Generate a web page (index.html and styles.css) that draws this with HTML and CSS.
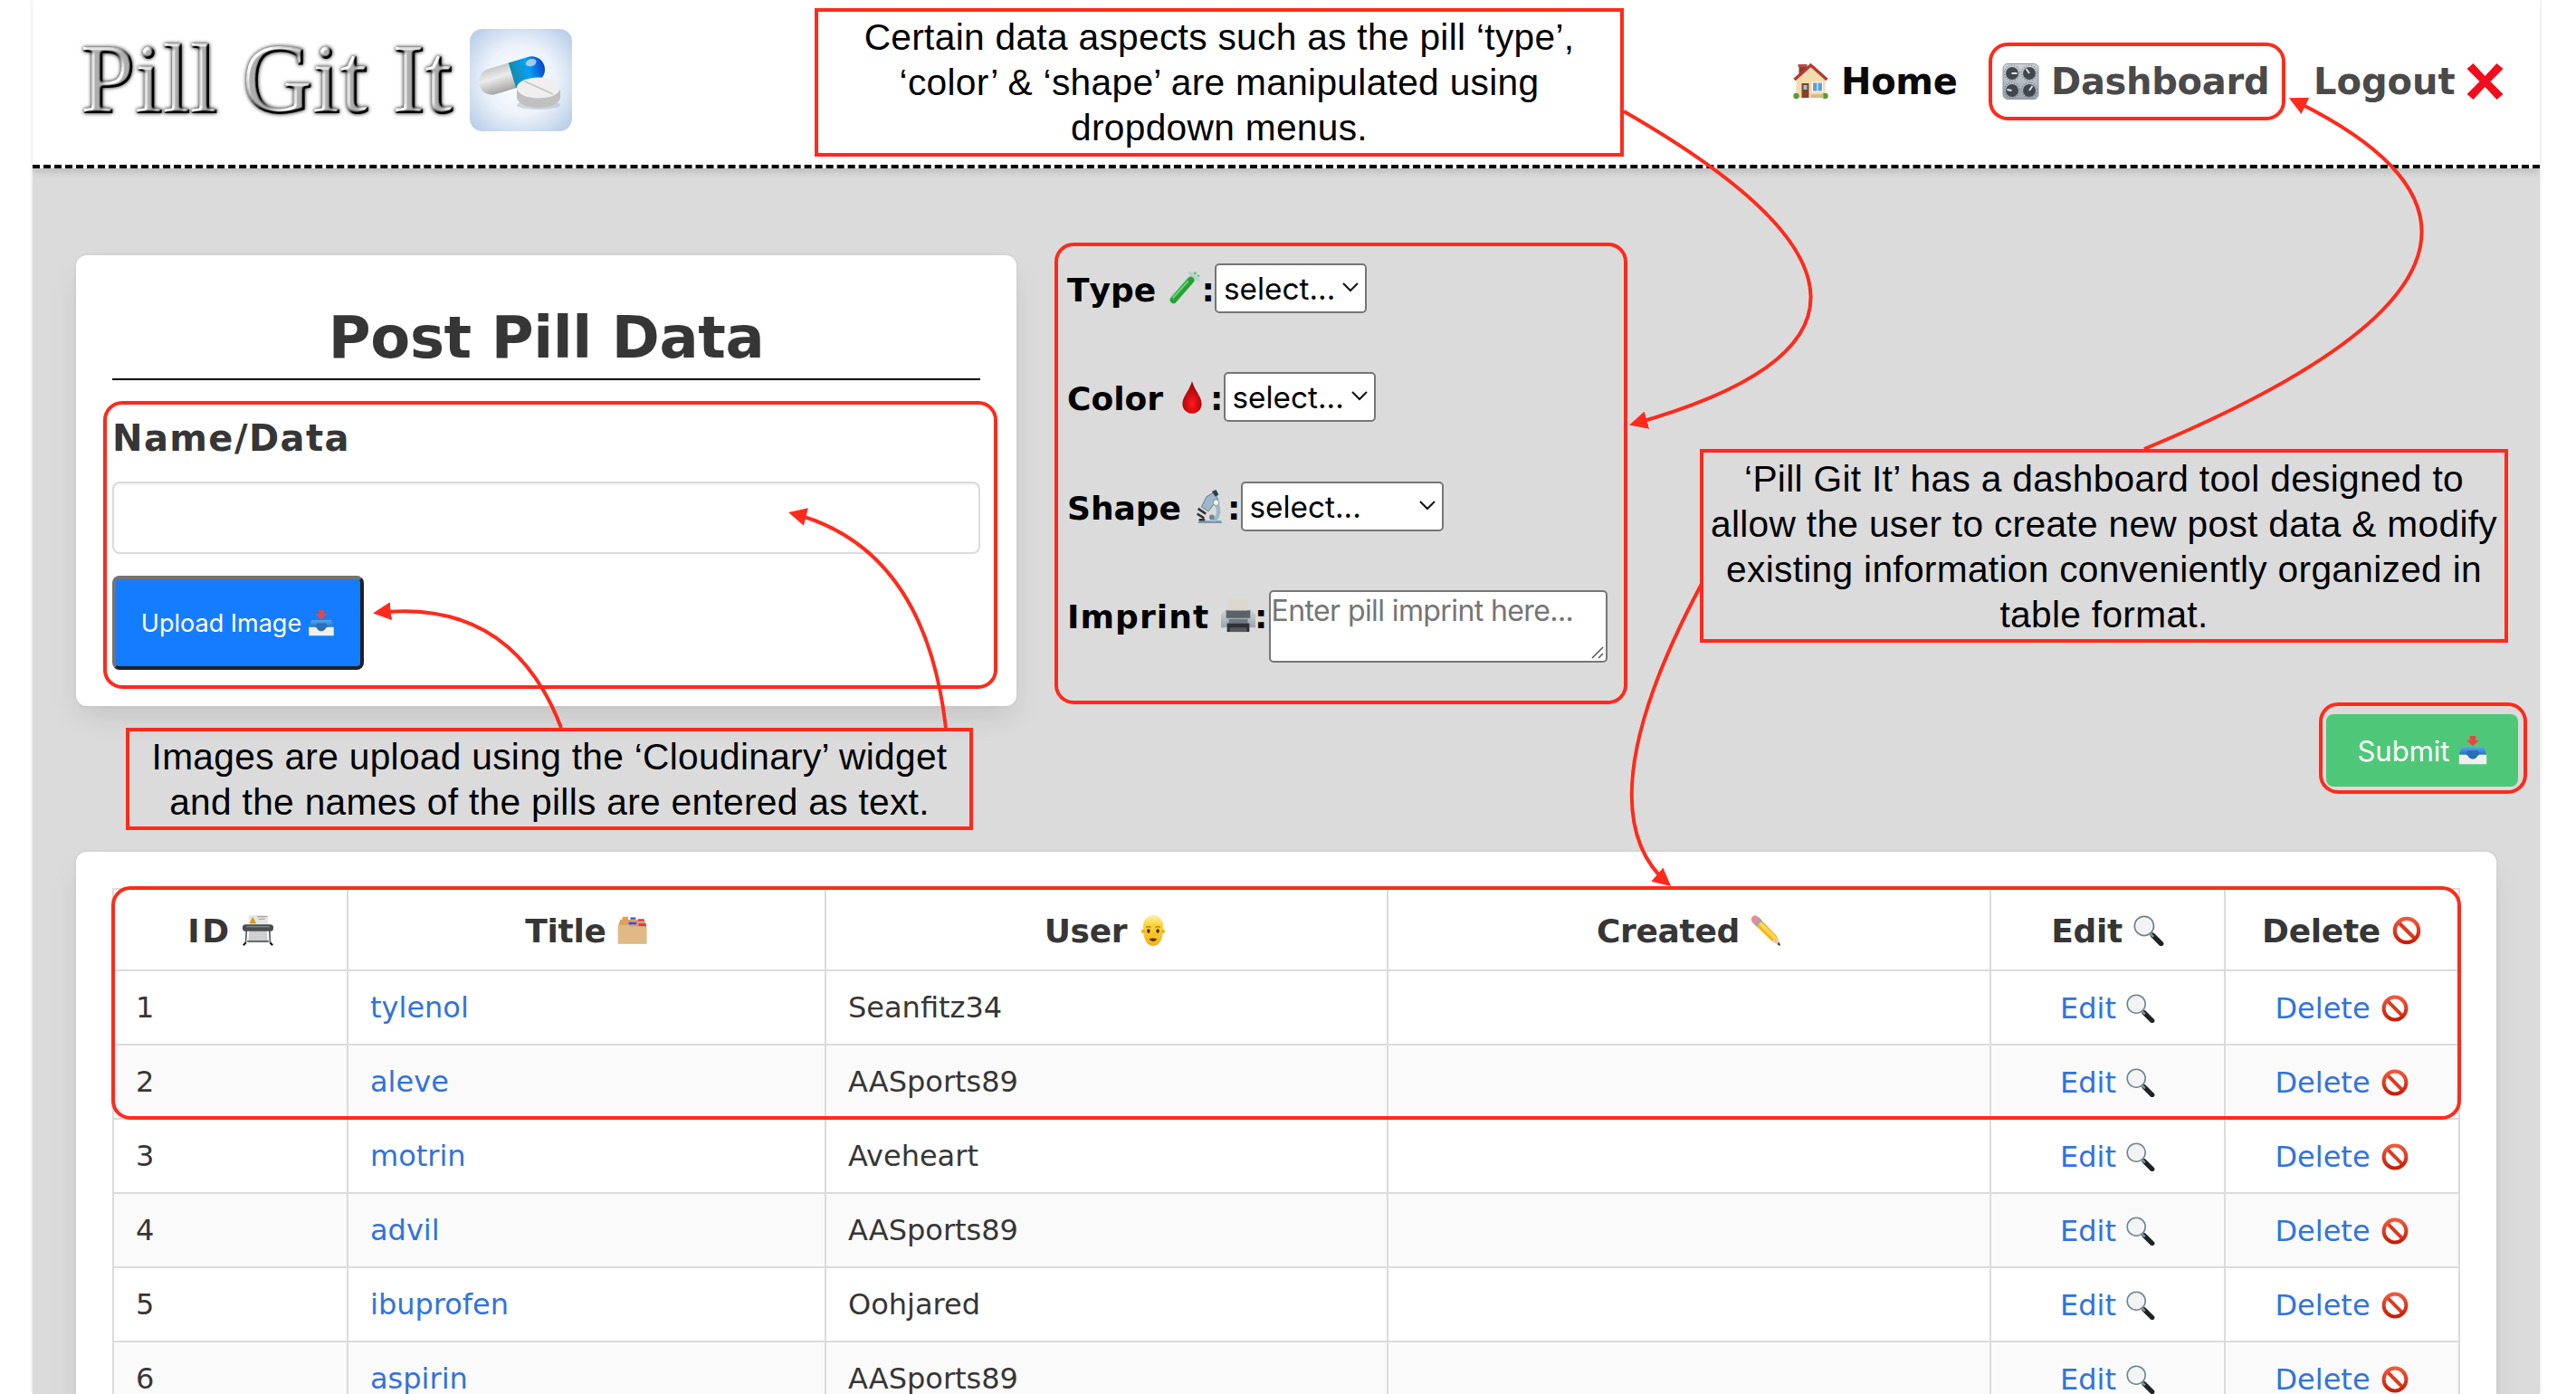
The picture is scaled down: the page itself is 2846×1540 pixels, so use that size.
FILE: index.html
```html
<!DOCTYPE html>
<html lang="en">
<head>
<meta charset="utf-8">
<title>Pill Git It</title>
<link rel="stylesheet" href="styles.css">
</head>
<body>
<svg class="defs" width="0" height="0">
  <defs>
    <filter id="bevel" x="-5%" y="-10%" width="110%" height="120%" color-interpolation-filters="sRGB">
      <feGaussianBlur in="SourceAlpha" stdDeviation="1.6" result="soft"/>
      <feDiffuseLighting in="soft" surfaceScale="5" diffuseConstant="1.1" lighting-color="#fff" result="lit"><feDistantLight azimuth="225" elevation="38"/></feDiffuseLighting>
      <feComposite in="lit" in2="SourceAlpha" operator="in" result="metal"/>
      <feGaussianBlur in="SourceAlpha" stdDeviation="2" result="shade"/>
      <feMerge><feMergeNode in="shade"/><feMergeNode in="metal"/></feMerge>
    </filter>
    <linearGradient id="gBlue" x1="0" y1="0" x2="0" y2="1"><stop offset="0" stop-color="#5aa9f0"/><stop offset="1" stop-color="#2371c4"/></linearGradient>
    <linearGradient id="gRed" x1="0" y1="0" x2="0" y2="1"><stop offset="0" stop-color="#f0583c"/><stop offset="1" stop-color="#c81e08"/></linearGradient>
    <linearGradient id="gGrey" x1="0" y1="0" x2="0" y2="1"><stop offset="0" stop-color="#cfd5d9"/><stop offset="1" stop-color="#9ba3ab"/></linearGradient>
    <linearGradient id="gFace" x1="0" y1="0" x2="0" y2="1"><stop offset="0" stop-color="#fdf3b0"/><stop offset=".3" stop-color="#fcd53a"/><stop offset="1" stop-color="#f0b01c"/></linearGradient>
    <radialGradient id="gDrop" cx=".5" cy=".7" r=".6"><stop offset="0" stop-color="#ff1a1a"/><stop offset="1" stop-color="#a40008"/></radialGradient>
    <radialGradient id="gTile" r=".68"><stop offset="0" stop-color="#fff"/><stop offset=".5" stop-color="#edf2fb"/><stop offset="1" stop-color="#b5cbe6"/></radialGradient>
    <linearGradient id="gCap" x1="0" y1="0" x2="1" y2="0"><stop offset="0" stop-color="#158ba8"/><stop offset=".5" stop-color="#0aa0f5"/><stop offset="1" stop-color="#0a45c8"/></linearGradient>
    <linearGradient id="gShell" x1="0" y1="0" x2="0" y2="1"><stop offset="0" stop-color="#c8c8c8"/><stop offset=".4" stop-color="#ececec"/><stop offset="1" stop-color="#a4a4a4"/></linearGradient>
  </defs>
  <symbol id="house" viewBox="0 0 40 40">
    <path d="M7 3h8v12H7z" fill="#8e3b33"/><path d="M6 1h10v3H6z" fill="#b05045"/>
    <path d="M4 18 20 4l16 14v20H4z" fill="#f5dcae"/>
    <path d="M2 18 20 2l18 16" fill="none" stroke="#b8392f" stroke-width="3.4"/>
    <path d="M10 22h8v16h-8z" fill="#86402b"/><path d="M12 24h4v5h-4z" fill="#8ec5ea"/>
    <path d="M22 21h11v10H22z" fill="#5c9fd6" stroke="#fff" stroke-width="1.2"/><path d="M27.500 21v10" stroke="#fff"/>
    <circle cx="4" cy="36" r="3.200" fill="#5c9a32"/><circle cx="36" cy="36" r="3.200" fill="#5c9a32"/><path d="M20 34h14v4H20z" fill="#d8bb88"/>
  </symbol>
  <symbol id="knobs" viewBox="0 0 40 40">
    <rect x=".5" y=".5" width="39" height="39" rx="5" fill="url(#gGrey)" stroke="#8d959b"/>
    <g fill="none" stroke="#69737a" stroke-width="1.200" stroke-dasharray="1 2"><circle cx="10.500" cy="10.500" r="8.500"/><circle cx="29.500" cy="10.500" r="8.500"/><circle cx="10.500" cy="29.500" r="8.500"/><circle cx="29.500" cy="29.500" r="8.500"/></g>
    <g fill="#40484d"><circle cx="10.500" cy="11" r="7"/><circle cx="29.500" cy="11" r="7"/><circle cx="10.500" cy="30" r="7"/><circle cx="29.500" cy="30" r="7"/></g>
    <path d="M10 11h6M29.500 11 26 6M10 30l-5-1M29.500 30l3.500-5" stroke="#e4e8ea" stroke-width="1.800"/>
  </symbol>
  <symbol id="cross" viewBox="0 0 40 40"><path d="M7 0 20 14 33 0l7 6-14 14 14 14-7 6-13-14L7 40l-7-6 14-14L0 6z" fill="#f20d1c"/></symbol>
  <symbol id="tube" viewBox="0 0 40 40">
    <path d="M32 5 7 33" stroke="#c3d8d0" stroke-width="9.500" stroke-linecap="round"/>
    <path d="M28 10 8 33" stroke="#23a336" stroke-width="8" stroke-linecap="round"/>
    <path d="M25 11 7 31" stroke="#72d873" stroke-width="2"/>
    <path d="m26 1 11 9" stroke="#b9cfc6" stroke-width="2.500" stroke-linecap="round"/>
    <circle cx="33" cy="2" r="1.400" fill="#5ec26a"/><circle cx="37" cy="5" r="1.200" fill="#5ec26a"/>
  </symbol>
  <symbol id="drop" viewBox="0 0 40 40"><path d="M20 1C17 12 8.800 19 8.800 27.500a11.200 11.200 0 0 0 22.400 0C31.200 19 23 12 20 1z" fill="url(#gDrop)"/></symbol>
  <symbol id="scope" viewBox="0 0 40 40">
    <path d="M8 36h26l1 3H7z" fill="#7d97a8"/>
    <path d="M27 12c8 5 8 18 1 25h-6c8-7 8-16 2-20z" fill="#9fb9c9"/>
    <path d="m17 8 9-5 4 8-11 14-8-5z" fill="#9cb8ca" stroke="#5d7585"/>
    <path d="m23 2 5-2 3 6-4 2z" fill="#333c42"/>
    <path d="m7 22 9 6M6 28l8 5M8 35h7" stroke="#2e3438" stroke-width="2.600"/>
    <circle cx="28" cy="15" r="3.500" fill="#eef4f7" stroke="#7a909e"/><circle cx="23" cy="32" r="3" fill="#6d8594"/>
  </symbol>
  <symbol id="printer" viewBox="0 0 40 40">
    <path d="M9 1h22v17H9z" fill="#dcd8cc"/>
    <path d="M5 13h30l5 6v15H0V19z" fill="url(#gGrey)"/><path d="M6 14h28v9H6z" fill="#59616b"/>
    <path d="M9 24h22v5H9z" fill="#6e7784"/><path d="M7 29h26v10H7z" fill="#2f3235"/><path d="M10 34h20v5H10z" fill="#55585b"/>
    <path d="M9 1h22v13H9z" fill="#dcd8cc"/>
  </symbol>
  <symbol id="tray" viewBox="0 0 40 40">
    <path d="M5 15h30l4 11H1z" fill="url(#gBlue)"/>
    <path d="M1 26h10c3 0 3 6 9 6s6-6 9-6h10v13H1z" fill="#f1f0ee"/>
    <path d="M11 26c3 0 3 6 9 6s6-6 9-6l-2-6H13z" fill="#2a6fb8"/>
    <path d="M16 0h8v6h5l-9 8-9-8h5z" fill="#e8473f"/>
  </symbol>
  <symbol id="plotter" viewBox="0 0 40 40">
    <path d="M8 0h25v14H8z" fill="#e4e6e6"/><path d="m13 2 5 9H9z" fill="#dc9a18"/><path d="M19 2h13M21 5h8" stroke="#888"/>
    <path d="M9 18h22l2 18H7z" fill="#cfcfcf"/>
    <path d="M5 20 4 37M35 20l1 17M6 34h28" stroke="#5c6062" stroke-width="2" fill="none"/>
    <rect x="0" y="12" width="40" height="9" rx="4" fill="#4b4e50"/><path d="M5 15h30" stroke="#85898c" stroke-width="1.500"/>
    <path d="m1 39 3-3M39 39l-3-3" stroke="#111" stroke-width="2.500"/>
  </symbol>
  <symbol id="dividers" viewBox="0 0 40 40">
    <path d="M4 6h31l3 8v23H1V14z" fill="#cfa272"/>
    <path d="M7 2h7v4H6zM5 7h9v3H5z" fill="#f79a3c"/><path d="M17 3h7v2.500h-7zM15 9h10v3H15z" fill="#3b49e8"/><path d="M27 5h8v2.500h-8zM28 11h9v3h-9z" fill="#f0303c"/>
    <path d="M1 13h13l3 2h21v22H1z" fill="#e0b987"/><path d="M28 11.500h9V14h-9z" fill="#f0303c"/>
  </symbol>
  <symbol id="face" viewBox="0 0 40 40">
    <path d="M20 0c9 0 13 6 13 16 0 14-4 24-13 24S7 30 7 16C7 6 11 0 20 0z" fill="url(#gFace)"/>
    <circle cx="7" cy="21" r="2.500" fill="#f0b01c"/><circle cx="33" cy="21" r="2.500" fill="#f0b01c"/>
    <ellipse cx="14" cy="20.500" rx="2" ry="2.700" fill="#4a2d0b"/><ellipse cx="26" cy="20.500" rx="2" ry="2.700" fill="#4a2d0b"/>
    <path d="M11 16c2-1.500 4-1.500 6 0M23 16c2-1.500 4-1.500 6 0" stroke="#a97417" fill="none" stroke-width="1.400"/><path d="M15 31c3-1.500 7-1.500 10 0-2 4-8 4-10 0z" fill="#5b3410"/>
  </symbol>
  <symbol id="pencil" viewBox="0 0 40 40">
    <path d="m6 13 7-8 22 23-7 6z" fill="#f7b81d"/><path d="m9 10 3-3 22 22-3 3z" fill="#ffd75c"/>
    <path d="m28 34 7-6 4 12z" fill="#ecc898"/><path d="m35 38 2-3 2 5z" fill="#222"/>
    <path d="m4 11 7-8 4 4-7 8z" fill="#9aa6b0"/><path d="M1 6c0-4 4-7 7-5l4 3-7 8-3-3z" fill="#ea8b93"/>
  </symbol>
  <symbol id="lens" viewBox="0 0 40 40">
    <path d="m25 26 11 11" stroke="#1f2326" stroke-width="6.500" stroke-linecap="round"/><path d="m21 23 5 5" stroke="#8b9499" stroke-width="3"/>
    <circle cx="14" cy="14" r="12.500" fill="#f1f3f4" stroke="#72838d" stroke-width="2"/>
  </symbol>
  <symbol id="ban" viewBox="0 0 40 40"><path d="M9 9l22 22" stroke="#dc3a20" stroke-width="5"/><circle cx="20" cy="20" r="15.500" fill="none" stroke="url(#gRed)" stroke-width="5"/></symbol>
</svg>

<div class="page">
  <header class="topbar">
    <div class="brand">
      <span class="wordmark">Pill Git It</span>
      <svg class="brand-tile" viewBox="0 0 113 113">
        <rect width="113" height="113" rx="14" fill="url(#gTile)"/>
        <ellipse cx="76" cy="84" rx="24" ry="5" fill="#b5bdc8" opacity=".6"/>
        <g transform="rotate(-17 46.500 51.500)">
          <rect x="9" y="37" width="75" height="29" rx="14.500" fill="url(#gShell)"/>
          <path d="M47 37h22.500a14.500 14.500 0 0 1 0 29H47z" fill="url(#gCap)"/>
          <ellipse cx="71" cy="44" rx="6" ry="4" fill="#fff" opacity=".6"/>
        </g>
        <path d="M52 66v9c0 7 11 12 24 12s24-5 24-12v-9z" fill="#c0c0c0"/>
        <ellipse cx="76" cy="65" rx="24" ry="11.500" fill="#efefef"/>
        <path d="M60 57.500 92 72" stroke="#c9c4bc" stroke-width="1.500"/>
      </svg>
    </div>
    <nav class="nav">
      <a class="nav-home"><svg class="i"><use href="#house"/></svg>Home</a>
      <a class="nav-dash"><svg class="i"><use href="#knobs"/></svg>Dashboard</a>
      <a class="nav-out">Logout<svg class="i"><use href="#cross"/></svg></a>
    </nav>
  </header>

  <main>
    <section class="editor">
      <form class="card post">
        <h1>Post Pill Data</h1>
        <label class="field-label" for="name">Name/Data</label>
        <input class="text-input" id="name" type="text">
        <button class="upload" type="button"><span>Upload Image</span><svg class="i"><use href="#tray"/></svg></button>
      </form>
      <div class="options">
        <div class="option"><label class="l-type">Type<svg class="i"><use href="#tube"/></svg>:</label><div class="select">select...<svg class="chev" viewBox="0 0 18 12"><path d="m1 1 8 8 8-8"/></svg></div></div>
        <div class="option"><label class="l-color">Color<svg class="i"><use href="#drop"/></svg>:</label><div class="select">select...<svg class="chev" viewBox="0 0 18 12"><path d="m1 1 8 8 8-8"/></svg></div></div>
        <div class="option"><label class="l-shape">Shape<svg class="i"><use href="#scope"/></svg>:</label><div class="select wide">select...<svg class="chev" viewBox="0 0 18 12"><path d="m1 1 8 8 8-8"/></svg></div></div>
        <div class="option"><label class="l-imprint">Imprint<svg class="i"><use href="#printer"/></svg>:</label><div class="area"><span>Enter pill imprint here...</span><svg class="grip" viewBox="0 0 14 14"><path d="M1 13 13 1M8 13l5-5"/></svg></div></div>
      </div>
    </section>

    <div class="actions"><button class="submit" type="button"><span>Submit</span><svg class="i"><use href="#tray"/></svg></button></div>

    <section class="card listing">
      <table>
        <colgroup><col class="c-id"><col class="c-title"><col class="c-user"><col class="c-created"><col class="c-edit"><col class="c-delete"></colgroup>
        <thead>
          <tr>
            <th><span class="pair id">ID<svg class="i"><use href="#plotter"/></svg></span></th>
            <th><span class="pair">Title<svg class="i"><use href="#dividers"/></svg></span></th>
            <th><span class="pair">User<svg class="i"><use href="#face"/></svg></span></th>
            <th><span class="pair">Created<svg class="i"><use href="#pencil"/></svg></span></th>
            <th><span class="pair">Edit<svg class="i"><use href="#lens"/></svg></span></th>
            <th><span class="pair">Delete<svg class="i"><use href="#ban"/></svg></span></th>
          </tr>
        </thead>
        <tbody>
          <tr><td>1</td><td><a>tylenol</a></td><td>Seanfitz34</td><td></td><td class="act"><a class="pair">Edit<svg class="i"><use href="#lens"/></svg></a></td><td class="act"><a class="pair">Delete<svg class="i"><use href="#ban"/></svg></a></td></tr>
          <tr><td>2</td><td><a>aleve</a></td><td>AASports89</td><td></td><td class="act"><a class="pair">Edit<svg class="i"><use href="#lens"/></svg></a></td><td class="act"><a class="pair">Delete<svg class="i"><use href="#ban"/></svg></a></td></tr>
          <tr><td>3</td><td><a>motrin</a></td><td>Aveheart</td><td></td><td class="act"><a class="pair">Edit<svg class="i"><use href="#lens"/></svg></a></td><td class="act"><a class="pair">Delete<svg class="i"><use href="#ban"/></svg></a></td></tr>
          <tr><td>4</td><td><a>advil</a></td><td>AASports89</td><td></td><td class="act"><a class="pair">Edit<svg class="i"><use href="#lens"/></svg></a></td><td class="act"><a class="pair">Delete<svg class="i"><use href="#ban"/></svg></a></td></tr>
          <tr><td>5</td><td><a>ibuprofen</a></td><td>Oohjared</td><td></td><td class="act"><a class="pair">Edit<svg class="i"><use href="#lens"/></svg></a></td><td class="act"><a class="pair">Delete<svg class="i"><use href="#ban"/></svg></a></td></tr>
          <tr><td>6</td><td><a>aspirin</a></td><td>AASports89</td><td></td><td class="act"><a class="pair">Edit<svg class="i"><use href="#lens"/></svg></a></td><td class="act"><a class="pair">Delete<svg class="i"><use href="#ban"/></svg></a></td></tr>
        </tbody>
      </table>
    </section>
  </main>
</div>

<div class="notes">
  <svg class="arrows" viewBox="0 0 2846 1540">
    <defs><marker id="head" viewBox="0 0 20 20" refX="16" refY="10" markerWidth="20" markerHeight="20" markerUnits="userSpaceOnUse" orient="auto"><path d="M0 0 20 10 0 20z" fill="#ff2a1c"/></marker></defs>
    <path d="M1794 123Q2202 357 1804 468.500"/>
    <path d="M2369 496Q2885 281 2532.500 110"/>
    <path d="M1880 645Q1747 894 1843 976.500"/>
    <path d="M620 804Q565 660 416 677"/>
    <path d="M1045 804Q1022 605 875 567"/>
  </svg>
  <div class="ring ring-dash"></div>
  <div class="ring ring-name"></div>
  <div class="ring ring-form"></div>
  <div class="ring ring-submit"></div>
  <div class="ring ring-rows"></div>
  <p class="note note-types">Certain data aspects such as the pill ‘type’,<br>‘color’ &amp; ‘shape’ are manipulated using<br>dropdown menus.</p>
  <p class="note note-upload">Images are upload using the ‘Cloudinary’ widget<br>and the names of the pills are entered as text.</p>
  <p class="note note-tool">‘Pill Git It’ has a dashboard tool designed to<br>allow the user to create new post data &amp; modify<br>existing information conveniently organized in<br>table format.</p>
</div>
</body>
</html>
```
FILE: styles.css
```css
* { box-sizing: border-box; }
html, body { margin: 0; height: 1540px; overflow: hidden; background: #fff; }
body { position: relative; font-family: Verdana, "DejaVu Sans", sans-serif; color: #363636; }
.defs { display: block; position: absolute; }
svg { display: block; }
a { text-decoration: none; }
.i { flex: none; }

.page { width: 2770px; height: 1540px; margin: 0 40px 0 36px; background: #dbdbdb; overflow: hidden; box-shadow: 0 0 4px rgba(0, 0, 0, .15); }

/* Header */
.topbar { display: flex; justify-content: space-between; height: 186px; padding: 0 40px 0 54px; background: #fff; border-bottom: 4px dashed #000; box-shadow: 0 4px 8px rgba(10, 10, 10, .15); }
.brand { display: flex; align-items: flex-start; padding-top: 32px; }
.wordmark { width: 429px; font: 107px/113px "Liberation Serif", serif; color: #aaa; white-space: nowrap; letter-spacing: .6px; -webkit-text-stroke: 2px #aaa; filter: url(#bevel); }
.brand-tile { width: 113px; height: 113px; }
.nav { display: flex; padding-top: 60px; height: 120px; font-size: 40px; font-weight: 700; line-height: 60px; }
.nav a { display: flex; align-items: center; gap: 13px; color: #4a4a4a; letter-spacing: -.3px; }
.nav .i { width: 41px; height: 40px; }
.nav .nav-home { width: 232px; color: #0a0a0a; }
.nav .nav-dash { width: 344px; }
.nav .nav-out { width: 210px; justify-content: space-between; gap: 0; letter-spacing: 0; }

/* Cards */
.card { background: #fff; border-radius: 12px; box-shadow: 0 16px 32px -4px rgba(10, 10, 10, .1), 0 0 0 2px rgba(10, 10, 10, .02); }
.editor { display: flex; align-items: flex-start; gap: 57px; padding: 96px 48px 0; }
.post { width: 1039px; height: 498px; padding: 48px 40px 40px; }
h1 { margin: 0 0 28px; height: 90px; border-bottom: 2px solid #000; font-size: 64px; line-height: 86px; text-align: center; letter-spacing: -.4px; }
.field-label { display: block; height: 84px; font-size: 40px; font-weight: 700; line-height: 72px; letter-spacing: 1.400px; }
.text-input { display: block; width: 100%; height: 80px; border: 2px solid #dbdbdb; border-radius: 8px; box-shadow: inset 0 2px 3px rgba(10, 10, 10, .05); }
.upload { display: flex; align-items: center; justify-content: center; gap: 7px; width: 278px; height: 104px; margin-top: 24px; padding: 0; border: 4px solid; border-color: #747474 #222 #222 #747474; border-radius: 8px; background: #147cff; color: #fff; font: 27px Inter, sans-serif; }
.upload .i { width: 30px; height: 29px; }

/* Pill options */
.options { display: grid; grid-template-rows: 120.4px 121px 120px 80px; padding-top: 9px; color: #000; }
.option { display: flex; align-items: flex-start; margin-left: -1px; }
.option label { display: flex; align-items: center; height: 55px; padding-top: 4px; font-size: 36px; font-weight: 700; font-kerning: none; }
.option .i { width: 40px; height: 38px; margin: -3px 0 0 auto; }
.l-type { width: 163px; }
.l-color { width: 172.500px; }
.l-shape { width: 191.500px; }
.l-imprint { width: 222.500px; letter-spacing: 1.100px; }
.option .l-imprint .i { margin-right: -2px; }
.select { display: flex; align-items: center; justify-content: space-between; width: 168px; height: 55px; padding: 0 7px 0 8px; border: 2px solid #767676; border-radius: 5px; background: #fff; font: 33.330px Inter, sans-serif; }
.select.wide { width: 224px; }
.chev { width: 18px; height: 12px; margin-top: -2px; fill: none; stroke: #111; stroke-width: 2; }
.area { display: flex; justify-content: space-between; width: 374px; height: 80px; padding: 0 2px 2px 1px; border: 2px solid #767676; border-radius: 5px; background: #fff; color: #757575; font: 32px/42px Inter, sans-serif; letter-spacing: -.6px; white-space: nowrap; }
.area span { width: 340px; }
.grip { width: 14px; height: 14px; align-self: flex-end; flex: none; fill: none; stroke: #555; stroke-width: 1.500; }

/* Submit */
.actions { display: flex; justify-content: flex-end; padding: 9px 24px 72px 0; }
.submit { display: flex; align-items: center; justify-content: center; gap: 9px; width: 212px; height: 80px; padding: 0; border: 0; border-radius: 8px; background: #4ec878; color: #fff; font: 31px Inter, sans-serif; }
.submit .i { width: 32px; height: 32px; }

/* Records table */
.listing { margin: 0 48px; padding: 40px; height: 700px; }
table { width: 2594px; table-layout: fixed; border-collapse: separate; border-spacing: 0; border: solid #dbdbdb; border-width: 2px 0 0 2px; font-size: 32px; }
.c-id, .c-edit, .c-delete { width: 259px; }
.c-title { width: 528px; }
.c-user { width: 621px; }
.c-created { width: 666px; }
th, td { padding: 0 24px; border: solid #dbdbdb; border-width: 0 2px 2px 0; text-align: left; }
th { height: 90px; font-size: 36px; text-align: center; letter-spacing: -.3px; }
td { height: 82px; }
tbody tr:nth-child(even) { background: #fafafa; }
td a { color: #3273dc; }
td.act { text-align: center; }
.pair { display: inline-flex; align-items: center; justify-content: center; gap: 12px; vertical-align: middle; }
.pair.id { letter-spacing: 2.500px; }
.pair .i { width: 34px; height: 34px; }
td .pair { gap: 11px; }
td .pair .i { width: 32px; height: 32px; }

/* Annotations */
.notes { position: absolute; inset: 0; }
.arrows { position: absolute; inset: 0; width: 2846px; height: 1540px; }
.arrows > path { fill: none; stroke: #ff2a1c; stroke-width: 4; marker-end: url(#head); }
.ring { position: absolute; border: 4px solid #ff2a1c; border-radius: 21px; }
.ring-dash { left: 2197px; top: 47px; width: 328px; height: 86px; }
.ring-name { left: 114px; top: 443px; width: 988px; height: 318px; }
.ring-form { left: 1165px; top: 268px; width: 633px; height: 510px; }
.ring-submit { left: 2562px; top: 776px; width: 230px; height: 101px; }
.ring-rows { left: 123px; top: 979px; width: 2596px; height: 258px; }
.note { position: absolute; margin: 0; border: 4px solid #ff2a1c; color: #000; font: 40.700px/50px "Liberation Sans", Arial, sans-serif; letter-spacing: .3px; text-align: center; white-space: nowrap; }
.note-types { left: 900px; top: 9px; width: 894px; height: 164px; padding-top: 3px; }
.note-upload { left: 139px; top: 804px; width: 936px; height: 113px; padding-top: 3px; }
.note-tool { left: 1878px; top: 496px; width: 893px; height: 214px; padding-top: 4px; }
```
